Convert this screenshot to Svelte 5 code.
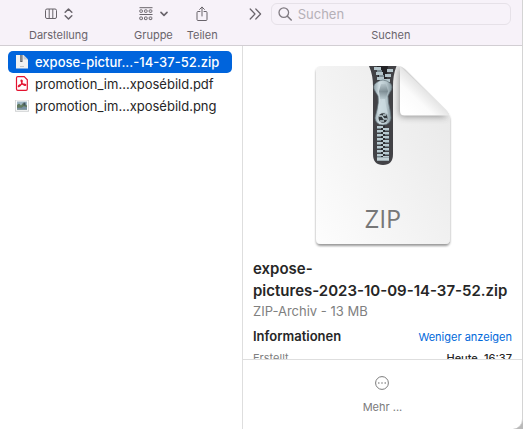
<!--
  Finder window: toolbar, file column and preview pane.
-->
<script lang="ts">
	type Kind = 'zip' | 'pdf' | 'png';
	interface FileItem { name: string; kind: Kind; }

	const files: FileItem[] = [
		{ name: 'expose-pictur...-14-37-52.zip', kind: 'zip' },
		{ name: 'promotion_im...xposébild.pdf', kind: 'pdf' },
		{ name: 'promotion_im...xposébild.png', kind: 'png' },
	];

	let selected = $state(0);
	let query = $state('');

	// zipper teeth below the slider, left and right rows interlock
	const teeth = Array.from({ length: 8 }, (_, i) => 66 + i * 4);
	// opened teeth above the slider, the rows drift apart towards the top
	const openTeeth = [
		{ y: 7, l: 66, r: 79 },
		{ y: 12, l: 68, r: 77 },
		{ y: 17, l: 69, r: 76 },
	];
</script>

<div class="window">
	<header class="toolbar">
		<button class="tool view">
			<span class="glyphs">
				<svg width="12" height="12" viewBox="0 0 12 12" fill="none" stroke="currentColor">
					<rect x="0.5" y="1" width="11" height="9.5" rx="1.5" />
					<path d="M4.2 1v9.5M7.8 1v9.5" />
				</svg>
				<svg width="9" height="12" viewBox="0 0 9 12" fill="none" stroke="currentColor" stroke-width="1.5" stroke-linecap="round" stroke-linejoin="round">
					<path d="M1.2 4.2 4.5 1l3.3 3.2M1.2 7.8 4.5 11l3.3-3.2" />
				</svg>
			</span>
			<span>Darstellung</span>
		</button>
		<button class="tool group">
			<span class="glyphs">
				<svg width="14" height="14" viewBox="0 0 14 14" fill="none" stroke="currentColor">
					<path d="M0.5 0.7h13M0.5 7.5h13" />
					{#each [0.8, 5.5, 10.2] as x}
						<rect {x} y="2.9" width="2.6" height="2.4" rx="0.6" />
						<rect {x} y="10" width="2.6" height="2.6" rx="0.6" />
					{/each}
				</svg>
				<svg width="8" height="6" viewBox="0 0 8 6" fill="none" stroke="currentColor" stroke-width="1.6" stroke-linecap="round" stroke-linejoin="round">
					<path d="M1 1.4 4 4.4 7 1.4" />
				</svg>
			</span>
			<span>Gruppe</span>
		</button>
		<button class="tool share">
			<span class="glyphs">
				<svg width="12" height="16" viewBox="0 0 12 16" fill="none" stroke="currentColor" stroke-linecap="round" stroke-linejoin="round">
					<path d="M4 5.5H2Q1 5.5 1 6.5v7q0 1 1 1h8q1 0 1-1v-7q0-1-1-1H8M6 10V1.2M3.6 3.4 6 1l2.4 2.4" />
				</svg>
			</span>
			<span>Teilen</span>
		</button>
		<button class="more" aria-label="Weitere Symbole">
			<svg width="13" height="12" viewBox="0 0 13 12" fill="none" stroke="currentColor" stroke-width="1.2" stroke-linecap="round" stroke-linejoin="round">
				<path d="M1.2 1 6 6l-4.8 5M6.8 1l4.8 5-4.8 5" />
			</svg>
		</button>
		<div class="search">
			<div class="field">
				<svg width="14" height="14" viewBox="0 0 14 14" fill="none" stroke="currentColor" stroke-width="1.3" stroke-linecap="round">
					<circle cx="5.8" cy="5.6" r="4.8" />
					<path d="m9.4 9.2 3.8 3.8" stroke-width="1.6" />
				</svg>
				<input id="search" type="text" placeholder="Suchen" bind:value={query} />
			</div>
			<label for="search">Suchen</label>
		</div>
	</header>

	<main>
		<ul class="files">
			{#each files as file, i}
				<li>
					<button class="file" class:selected={selected === i} onclick={() => (selected = i)}>
						<svg width="16" height="16" viewBox="0 0 16 16">
							{#if file.kind === 'zip'}
								<path d="M2 1h7.500L14 5.500V14.500H2z" fill="#f1f1f1" />
								<path d="M9.500 1V5.500H14z" fill="#c9cdd2" />
								<path d="M6.200 1h2.300v7H6.200z" fill="#5c6066" />
								<path d="M7.300 1.500v5.600" stroke="#c3c9cc" stroke-dasharray="1 1" />
								<path d="M6 12.500h4" stroke="#c6c6c6" />
							{:else if file.kind === 'pdf'}
								<path d="M3.8 0.700h6.400l3.100 3.100v9.200q0 1.300-1.300 1.300H3.8q-1.300 0-1.300-1.300V2q0-1.300 1.300-1.300z" fill="#fff" stroke="#e3122f" stroke-width="1.200" />
								<path d="M7.400 4c1.500 0 .9 2.400-.3 4.400-1.100 1.800-2.400 2.900-2.800 2.100-.5-1 2-2 4.200-2.300 2-.3 3.600.1 3.300.9-.4.9-2.400-.1-3.600-1.700-1-1.400-1.700-3.400-.8-3.400z" fill="none" stroke="#e3122f" stroke-width="1.100" />
							{:else}
								<rect x="1" y="2" width="14" height="11.500" rx="0.500" fill="#b4b7b9" />
								<rect x="1.500" y="2.300" width="13" height="10.500" fill="#fff" />
								<rect x="3" y="3.500" width="10" height="8" fill="#9fb7c6" />
								<path d="M3 7 5 5.500l2 2 2-2.500 4 2.500v4H3z" fill="#627a5e" />
								<path d="M3 9.800h4.700l2-1.500 3.300 1v2.200H3z" fill="#7890a2" />
								<path d="M9.500 4.500h2v3h-2z" fill="#41545d" />
							{/if}
						</svg>
						<span>{file.name}</span>
					</button>
				</li>
			{/each}
		</ul>

		<section class="preview">
			<div class="details">
				<svg class="archive" width="150" height="192" viewBox="0 0 150 192" role="img" aria-label="ZIP">
					<defs>
						<linearGradient id="paper" x1="0" y1="1" x2="1" y2="0.2">
							<stop offset="0" stop-color="#fdfdfd" />
							<stop offset="1" stop-color="#e9e9e9" />
						</linearGradient>
						<linearGradient id="fold" x1="0.1" y1="0.9" x2="0.55" y2="0.45">
							<stop offset="0" stop-color="#fff" />
							<stop offset="0.5" stop-color="#fbfbfb" />
							<stop offset="1" stop-color="#dedede" />
						</linearGradient>
						<linearGradient id="metal">
							<stop offset="0" stop-color="#8fa0a7" />
							<stop offset="0.3" stop-color="#cfdde2" />
							<stop offset="0.7" stop-color="#b5c5cb" />
							<stop offset="1" stop-color="#7f9097" />
						</linearGradient>
						<linearGradient id="groove" x2="0" y2="1">
							<stop offset="0" stop-color="#aebdc3" />
							<stop offset="0.5" stop-color="#5f6f76" />
							<stop offset="1" stop-color="#b5c6cc" />
						</linearGradient>
						<filter id="drop" x="-10%" y="-10%" width="120%" height="120%">
							<feDropShadow dx="0" dy="2" stdDeviation="1.3" flood-opacity="0.4" />
						</filter>
						<filter id="soft" x="-30%" y="-30%" width="160%" height="160%">
							<feGaussianBlur stdDeviation="3" />
						</filter>
						<clipPath id="sheet">
							<path d="M13 6H90Q94 6 97 9L138 50Q142 54 142 59V179Q142 184 137 184H13Q8 184 8 179V11Q8 6 13 6z" />
						</clipPath>
					</defs>
					<path d="M13 6H90Q94 6 97 9L138 50Q142 54 142 59V179Q142 184 137 184H13Q8 184 8 179V11Q8 6 13 6z" fill="url(#paper)" filter="url(#drop)" />
					<g clip-path="url(#sheet)">
						<path d="M91 6V52Q91 57 96 57H140L91 6z" fill="#444" opacity="0.5" filter="url(#soft)" />
						<path d="M61 6H88.500Q85 15 85 26V94Q85 105 75 105 65 105 65 94V26Q65 15 61 6z" fill="#424246" />
						<path d="M69 6h11l-2 18h-7z" fill="#232326" />
						{#each openTeeth as t}
							<path d="M{t.l} {t.y}h7v3h-7zM{t.r} {t.y + 2}h6v3h-6z" fill="#b4c5cb" />
							<path d="M{t.l + 3} {t.y + 3}h5v2h-5z" fill="#7d8d94" />
						{/each}
						<path d="M73 64h4v36h-4z" fill="#2d2e31" />
						{#each teeth as y}
							<path d="M69 {y}h6v2h-6zM75 {y + 2}h6v2h-6z" fill="#b9cbd1" />
							<path d="M69 {y + 2}h4v1h-4zM77 {y + 4}h4v1h-4z" fill="#75868d" />
						{/each}
						<path d="M69 97h12v4H69z" fill="#9baab0" />
						<path d="M69 98h12v2H69z" fill="#c2d0d4" />
						<path d="M71 21Q75 19 79 21L82 23Q86 27 82 32L80 36Q80 42 82 50L83 58Q82 65 75 65 68 65 67 58L69 50Q71 42 70 36L67 31Q64 26 68 23z" fill="url(#metal)" stroke="#65757c" stroke-width="0.7" />
						<path d="M73 24h5l2 7-2 8h-6l-1-8z" fill="url(#groove)" opacity="0.65" />
						<path d="M74 39q-2 8-4 15 5-4 10 0-2-7-3-15z" fill="#cddde2" opacity="0.7" />
						<ellipse cx="75" cy="58" rx="4.500" ry="4.800" fill="#343a3e" />
						<path d="M71 56h3l2 3h3M72 61h4M75 55h3" stroke="#bdced4" stroke-width="1.300" fill="none" />
						<path d="M92 6V51Q92 55.500 96.500 55.500H144z" fill="url(#fold)" />
					</g>
					<text x="75" y="168" text-anchor="middle">ZIP</text>
				</svg>
				<h1>expose-<br />pictures-2023-10-09-14-37-52.zip</h1>
				<p class="meta">ZIP-Archiv - 13 MB</p>
				<div class="row">
					<h2>Informationen</h2>
					<a href="#info">Weniger anzeigen</a>
				</div>
				<dl class="row" id="info">
					<dt>Erstellt</dt>
					<dd>Heute, 16:37</dd>
				</dl>
			</div>
			<footer>
				<button class="actions">
					<svg width="14" height="14" viewBox="0 0 14 14" fill="none" stroke="currentColor">
						<circle cx="7" cy="7" r="6.400" />
						<path d="M3.800 7h.01M7 7h.01M10.200 7h.01" stroke-width="1.600" stroke-linecap="round" />
					</svg>
					<span>Mehr ...</span>
				</button>
			</footer>
		</section>
	</main>
</div>

<style>
	:global(body) {
		background: #b9b9b9;
	}

	.window {
		box-sizing: border-box;
		height: 100vh;
		display: flex;
		flex-direction: column;
		overflow: hidden;
		background: #fff;
		border-right: 1px solid #d4d4d4;
		border-bottom-right-radius: 10px;
		color: #262626;
		font: 13px/22px Inter, "Liberation Sans", sans-serif;
	}

	button {
		padding: 0;
		border: 0;
		background: none;
		color: inherit;
		font: inherit;
	}

	svg {
		display: block;
		flex: none;
	}

	.toolbar {
		display: flex;
		align-items: flex-start;
		box-sizing: border-box;
		height: 46px;
		padding: 3px 11px 0 29px;
		border-bottom: 1px solid #d2ced3;
		background: #f7f2f9;
		color: #69646b;
		font-size: 11px;
		line-height: 14px;
	}

	.tool {
		display: flex;
		flex-direction: column;
		align-items: center;
		gap: 3px;
	}

	.glyphs {
		display: flex;
		align-items: center;
		gap: 7px;
		height: 22px;
	}

	.group {
		margin-left: 46px;
	}

	.share {
		margin-left: 14px;
	}

	.more {
		height: 22px;
		margin-left: 31px;
	}

	.search {
		flex: 1;
		display: flex;
		flex-direction: column;
		align-items: center;
		gap: 3px;
		margin-left: 9px;
	}

	.field {
		box-sizing: border-box;
		width: 100%;
		height: 22px;
		display: flex;
		align-items: center;
		gap: 6px;
		padding: 0 6px;
		border: 1px solid #e6e1e8;
		border-radius: 6px;
		color: #807b82;
	}

	.field input {
		flex: 1;
		min-width: 0;
		padding: 0;
		border: 0;
		outline: 0;
		background: none;
		color: #262626;
		font: inherit;
		font-size: 13px;
	}

	.field input::placeholder {
		color: #b5b0b7;
		opacity: 1;
	}

	main {
		flex: 1;
		min-height: 0;
		display: flex;
	}

	.files {
		flex: 0 0 242px;
		box-sizing: border-box;
		margin: 0;
		padding: 5px 10px 5px 8px;
		list-style: none;
	}

	.file {
		display: flex;
		align-items: center;
		gap: 5px;
		width: 100%;
		height: 22px;
		padding: 0 6px;
		border-radius: 5px;
		line-height: 20px;
		white-space: nowrap;
	}

	.file.selected {
		background: #0064dc;
		color: #fff;
		font-weight: 500;
	}

	.preview {
		flex: 1;
		min-width: 0;
		display: flex;
		flex-direction: column;
		border-left: 1px solid #dedede;
	}

	.details {
		flex: 1;
		min-height: 0;
		overflow: hidden;
		padding: 14px 10px 0;
	}

	.archive {
		margin: 0 auto;
	}

	.archive text {
		fill: #777;
		font-family: "Open Sans", sans-serif;
		font-size: 25px;
	}

	h1 {
		margin: 6px 0 0;
		font-size: 15px;
		font-weight: 600;
		line-height: 22px;
		white-space: nowrap;
	}

	.meta {
		margin: 0;
		color: #808080;
		line-height: 18px;
	}

	.row {
		display: flex;
		align-items: baseline;
		justify-content: space-between;
		margin: 5px 0 0;
		font-size: 11px;
	}

	h2 {
		margin: 0;
		font-size: 13px;
		font-weight: 600;
	}

	a {
		color: #0068da;
		text-decoration: none;
	}

	dl.row {
		margin: 0;
		line-height: 20px;
	}

	dt {
		color: #808080;
	}

	dd {
		margin: 0;
		font-weight: 500;
	}

	footer {
		flex: none;
		display: flex;
		justify-content: center;
		padding: 16px 0 15px;
		border-top: 1px solid #dedede;
	}

	.actions {
		display: flex;
		flex-direction: column;
		align-items: center;
		gap: 10px;
		color: #7b7b7b;
		font-size: 11px;
		line-height: 14px;
	}
</style>
